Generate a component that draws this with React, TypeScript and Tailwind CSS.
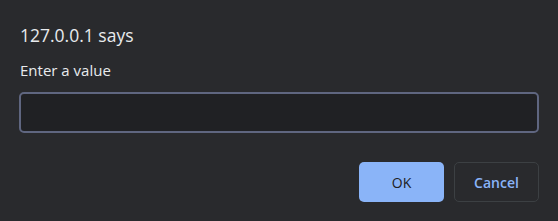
export default function App() {
  return (
    <div
      className="w-[558px] h-[221px] bg-[#292a2d] text-[#e8eaed] px-[19px] pt-[24px] flex flex-col"
      style={{ fontFamily: '"Open Sans", "Noto Sans", sans-serif' }}
    >
      <h1 className="pl-[1px] text-[17.5px] leading-[22px]">127.0.0.1 says</h1>
      <label className="mt-[15px] pl-[1px] text-[15px] leading-[19px]">Enter a value</label>
      <input
        type="text"
        className="mt-[12px] h-[41px] w-full rounded-[5px] border-2 border-[#5f6680] bg-[#202124] px-2 text-sm text-[#e8eaed] outline-none"
      />
      <div className="mt-[29px] flex justify-end gap-[10px]">
        <button
          type="button"
          className="h-[40px] w-[85px] rounded-[5px] bg-[#8ab4f8] text-[14px] text-[#202124]"
        >
          OK
        </button>
        <button
          type="button"
          className="h-[40px] w-[85px] rounded-[5px] border border-[#3c4043] text-[14px] font-semibold text-[#8ab4f8]"
        >
          Cancel
        </button>
      </div>
    </div>
  );
}
